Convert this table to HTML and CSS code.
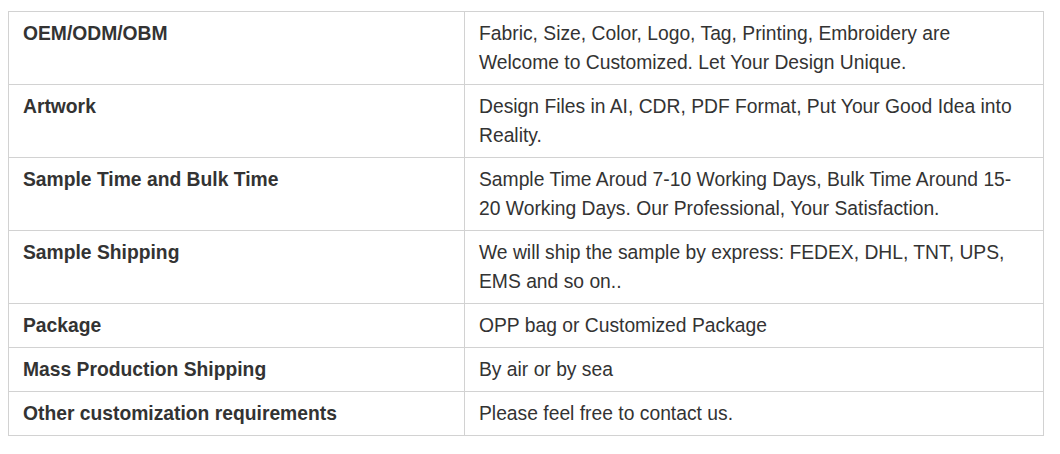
FILE: index.html
```html
<!DOCTYPE html>
<html lang="en">
<head>
    <meta charset="UTF-8">
    <meta name="viewport" content="width=device-width, initial-scale=1.0">
    <title>Customization Service</title>
    <link rel="stylesheet" href="styles.css">
</head>
<body>
    <table class="spec-table">
        <colgroup>
            <col class="col-label">
            <col>
        </colgroup>
        <tr>
            <th>OEM/ODM/OBM</th>
            <td>Fabric, Size, Color, Logo, Tag, Printing, Embroidery are Welcome to Customized. Let Your Design Unique.</td>
        </tr>
        <tr>
            <th>Artwork</th>
            <td>Design Files in AI, CDR, PDF Format, Put Your Good Idea into Reality.</td>
        </tr>
        <tr>
            <th>Sample Time and Bulk Time</th>
            <td>Sample Time Aroud 7-10 Working Days, Bulk Time Around 15-20 Working Days. Our Professional, Your Satisfaction.</td>
        </tr>
        <tr>
            <th>Sample Shipping</th>
            <td>We will ship the sample by express: FEDEX, DHL, TNT, UPS, EMS and so on..</td>
        </tr>
        <tr>
            <th>Package</th>
            <td>OPP bag or Customized Package</td>
        </tr>
        <tr>
            <th>Mass Production Shipping</th>
            <td>By air or by sea</td>
        </tr>
        <tr>
            <th>Other customization requirements</th>
            <td>Please feel free to contact us.</td>
        </tr>
    </table>
</body>
</html>
```

FILE: styles.css
```css
body {
    margin: 0;
    padding: 11px 8px;
    background: #fff;
    font-family: "Liberation Sans", Arial, sans-serif;
    color: #333;
}
.spec-table {
    width: 1036px;
    border-collapse: collapse;
    table-layout: fixed;
    font-size: 19.3px;
    line-height: 29px;
}
.col-label {
    width: 456px;
}
.spec-table th,
.spec-table td {
    border: 1px solid #d2d2d2;
    padding: 7px 14px 7px 14px;
    text-align: left;
    vertical-align: top;
}
.spec-table th {
    font-weight: bold;
}
```
